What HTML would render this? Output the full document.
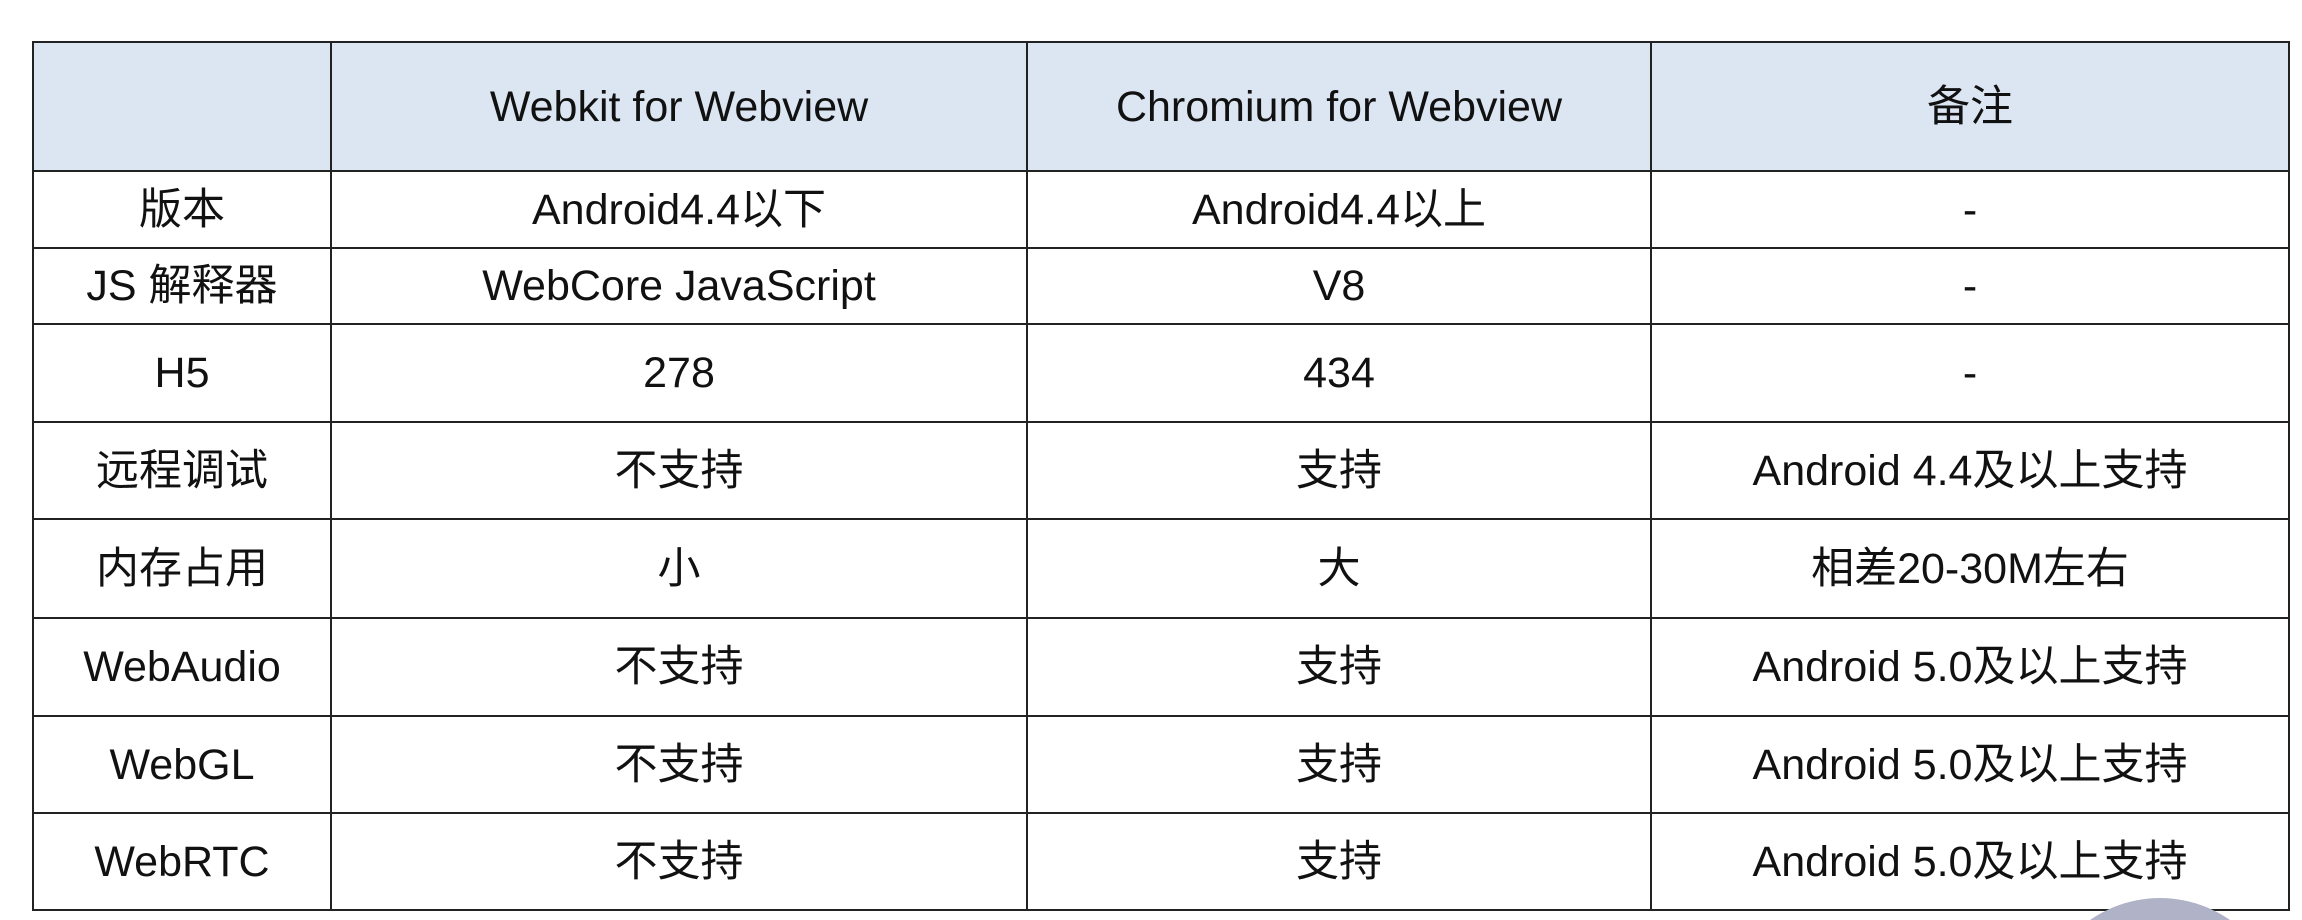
<!DOCTYPE html>
<html><head><meta charset="utf-8"><style>
html,body{margin:0;padding:0;background:#fff;width:2302px;height:920px;overflow:hidden;position:relative}
table{position:absolute;left:32px;top:41px;border-collapse:collapse;font-family:"Liberation Sans","Noto Sans CJK SC",sans-serif;font-size:43px;color:#111;table-layout:fixed;width:2256px}
td{border:2px solid #222;text-align:center;vertical-align:middle;padding:0;line-height:50px;overflow:hidden}
tr.h td{background:#dce6f2}
.cw{position:absolute;left:1900px;top:880px;width:402px;height:40px;overflow:hidden}
.c{position:absolute;left:138px;top:18px;width:244px;height:244px;border-radius:50%;background:#b0b2c8}
</style></head><body>
<table>
<colgroup><col style="width:298px"><col style="width:696px"><col style="width:624px"><col style="width:638px"></colgroup>
<tr class="h" style="height:129px"><td></td><td>Webkit for Webview</td><td>Chromium for Webview</td><td>备注</td></tr>
<tr style="height:77px"><td>版本</td><td>Android4.4以下</td><td>Android4.4以上</td><td>-</td></tr>
<tr style="height:76px"><td>JS 解释器</td><td>WebCore JavaScript</td><td>V8</td><td>-</td></tr>
<tr style="height:98px"><td>H5</td><td>278</td><td>434</td><td>-</td></tr>
<tr style="height:97px"><td>远程调试</td><td>不支持</td><td>支持</td><td>Android 4.4及以上支持</td></tr>
<tr style="height:99px"><td>内存占用</td><td>小</td><td>大</td><td>相差20-30M左右</td></tr>
<tr style="height:98px"><td>WebAudio</td><td>不支持</td><td>支持</td><td>Android 5.0及以上支持</td></tr>
<tr style="height:97px"><td>WebGL</td><td>不支持</td><td>支持</td><td>Android 5.0及以上支持</td></tr>
<tr style="height:97px"><td>WebRTC</td><td>不支持</td><td>支持</td><td>Android 5.0及以上支持</td></tr>
</table>
<div class="cw"><div class="c"></div></div>
</body></html>
